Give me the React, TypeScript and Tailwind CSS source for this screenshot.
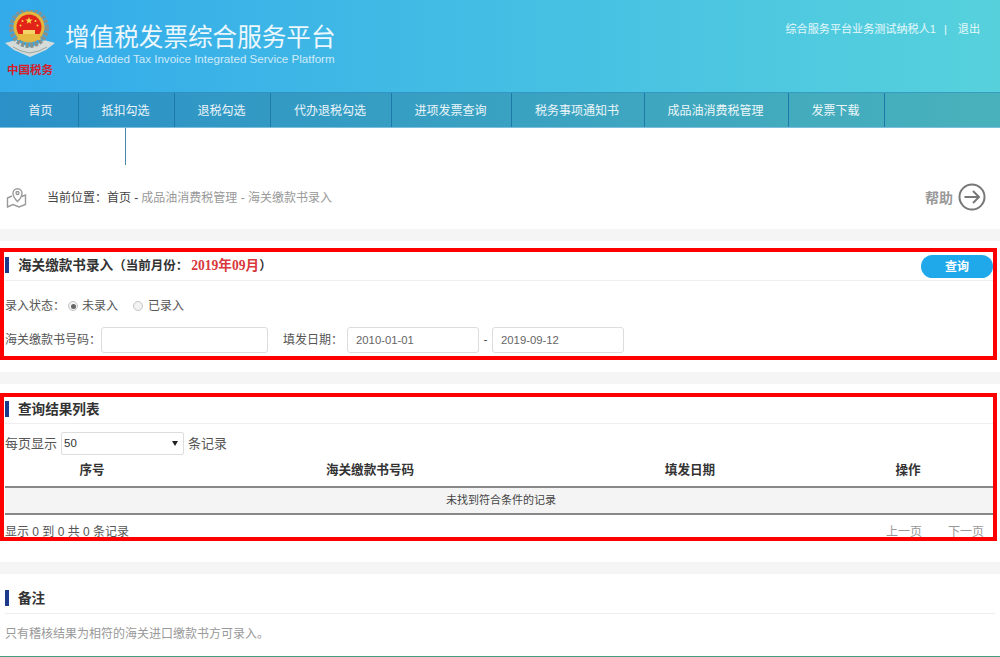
const navItems = [
  { label: '首页', width: 'w-[79px] pl-[5px]' },
  { label: '抵扣勾选', width: 'w-[96px]' },
  { label: '退税勾选', width: 'w-[96px]' },
  { label: '代办退税勾选', width: 'w-[121px]' },
  { label: '进项发票查询', width: 'w-[120px]' },
  { label: '税务事项通知书', width: 'w-[133px]' },
  { label: '成品油消费税管理', width: 'w-[144px]' },
  { label: '发票下载', width: 'w-[96px]' },
]

function Emblem() {
  return (
    <svg width="50" height="48" viewBox="0 0 50 48">
      <path d="M0 33 L11 30 Q19 36 25 37 Q31 36 39 30 L50 33 L41 40 L25 47 L9 40Z" fill="#d5dbd8" />
      <path d="M8 37 Q16 42 25 43 Q34 42 42 37" fill="none" stroke="#9aa5a3" strokeWidth="1" />
      <circle cx="24" cy="18" r="17.5" fill="none" stroke="#87918d" strokeWidth="5" strokeDasharray="3 1.6" />
      <circle cx="24" cy="17" r="15.5" fill="#e4b63e" />
      <circle cx="24" cy="17" r="12.5" fill="#e2231a" />
      <path d="M14 24 H34 L36 30 H12Z" fill="#e7b93f" />
      <path d="M18 20 H30 V24 H18Z" fill="#f4d468" />
      <path d="M24 7 l1 2.6 h2.7 l-2.2 1.6 .8 2.6 -2.3 -1.6 -2.3 1.6 .8 -2.6 -2.2 -1.6 h2.7Z" fill="#f7d64a" />
      <circle cx="17.5" cy="11" r="1" fill="#f7d64a" />
      <circle cx="30.5" cy="11" r="1" fill="#f7d64a" />
      <circle cx="15.5" cy="15.5" r="1" fill="#f7d64a" />
      <circle cx="32.5" cy="15.5" r="1" fill="#f7d64a" />
    </svg>
  )
}

function SectionTitle({ height, children }: { height: string; children: React.ReactNode }) {
  return (
    <div className={`${height} flex items-center border-b border-[#eeeeee] pb-[2px]`}>
      <span className="h-[16px] w-[4px] bg-[#1c3a8c]" />
      <span className="ml-[9px] mt-[3px] whitespace-nowrap text-[13.6px] font-bold text-[#333333]">{children}</span>
    </div>
  )
}

function Radio({ checked }: { checked?: boolean }) {
  return (
    <span className="flex h-[10px] w-[10px] items-center justify-center rounded-full border border-[#c4c4c4] bg-[#f2f2f2]">
      {checked && <span className="h-[5px] w-[5px] rounded-full bg-[#666666]" />}
    </span>
  )
}

export default function App() {
  return (
    <div className="h-[657px] w-[1000px] overflow-hidden bg-white font-['Liberation_Sans','Noto_Sans_CJK_SC',sans-serif] text-[12px] text-[#555555]">
      <header className="flex h-[128px] flex-col bg-gradient-to-r from-[#33aaea] to-[#56d1dc]">
        <div className="flex h-[92px] items-start justify-between">
          <div className="flex">
            <div className="ml-[5px] mt-[10px] flex w-[50px] flex-col items-center">
              <Emblem />
              <span className="mt-[4px] whitespace-nowrap text-[11.5px] font-bold leading-[16px] text-[#d3202a]">中国税务</span>
            </div>
            <div className="ml-[10px] mt-[22px] text-white/90">
              <div className="text-[24.6px] leading-[32px] whitespace-nowrap">增值税发票综合服务平台</div>
              <div className="-mt-[2px] text-[11.6px] leading-[14px] whitespace-nowrap text-white/75">
                Value Added Tax Invoice Integrated Service Platform
              </div>
            </div>
          </div>
          <div className="mr-[20px] mt-[21px] flex text-[11.1px] leading-[16px] text-white/85">
            <span>综合服务平台业务测试纳税人1</span>
            <span className="ml-[8px]">|</span>
            <span className="ml-[11px]">退出</span>
          </div>
        </div>
        <nav className="flex h-[36px] border-y border-b-[#7cbfdc] border-t-[#2f8fc4]/60 bg-black/15">
          {navItems.map((item) => (
            <div
              key={item.label}
              className={`${item.width} flex items-center justify-center border-r border-[#1f78aa] pr-[2px] pt-[1px] text-[12px] whitespace-nowrap text-white/90`}
            >
              {item.label}
            </div>
          ))}
        </nav>
      </header>

      <div className="ml-[125px] h-[37px] w-px bg-[#4a86a8]" />

      <div className="flex h-[64px] items-center justify-between">
        <div className="flex items-center">
          <svg className="ml-[6px]" width="21" height="21" viewBox="0 0 21 21" fill="none" stroke="#999999" strokeWidth="1.4">
            <path d="M6 9 L1.5 11 V20 L7 17.5 L13 20 L19.5 17.5 V8 L15.5 9.5" />
            <path d="M11.5 14.5 C8.5 11.5 7 9 7 6.2 A4.5 4.5 0 0 1 16 6.2 C16 9 14.5 11.5 11.5 14.5Z" />
            <circle cx="11.5" cy="6" r="1.5" />
          </svg>
          <span className="ml-[20px] mt-[2px] text-[#444444]">当前位置：首页 - </span>
          <span className="ml-[3px] mt-[2px] text-[#999999]">成品油消费税管理 - 海关缴款书录入</span>
        </div>
        <div className="mr-[14px] flex items-center">
          <span className="mt-[2px] text-[14px] font-bold text-[#999999]">帮助</span>
          <svg className="ml-[5px]" width="28" height="28" viewBox="0 0 28 28" fill="none" stroke="#777777" strokeWidth="2">
            <circle cx="14" cy="14" r="12.5" />
            <path d="M6.5 14 H21 M15 8 L21 14 L15 20" />
          </svg>
        </div>
      </div>

      <div className="h-[12px] bg-[#f5f5f5]" />

      <section className="mr-[3px] mt-[7px] h-[112px] border-[4px] border-[#ff0000] pl-[1px]">
        <div className="relative">
          <SectionTitle height="h-[29px]">
            海关缴款书录入
            <span className="text-[12.5px]">（当前月份：</span>
            <span className="ml-[3px] font-['Liberation_Serif','Noto_Sans_CJK_SC',serif] text-[#d9383c]">2019年09月</span>
            <span className="text-[12.5px]">）</span>
          </SectionTitle>
          <button className="absolute right-0 top-[3px] h-[23px] w-[72px] rounded-full bg-[#1fa9ea] text-[12px] font-bold text-white">
            查询
          </button>
        </div>
        <div className="mt-[16px] flex h-[18px] items-center">
          <span>录入状态：</span>
          <span className="ml-[3px]"><Radio checked /></span>
          <span className="ml-[4px]">未录入</span>
          <span className="ml-[15px]"><Radio /></span>
          <span className="ml-[5px]">已录入</span>
        </div>
        <div className="mt-[12px] flex items-center">
          <span>海关缴款书号码：</span>
          <div className="h-[26px] w-[167px] rounded-[3px] border border-[#dddddd] bg-white" />
          <span className="ml-[15px]">填发日期：</span>
          <div className="ml-[4px] flex h-[26px] w-[132px] items-center rounded-[3px] border border-[#dddddd] px-[8px] text-[11.3px] text-[#666666]">2010-01-01</div>
          <span className="w-[13px] text-center">-</span>
          <div className="flex h-[26px] w-[132px] items-center rounded-[3px] border border-[#dddddd] px-[8px] text-[11.3px] text-[#666666]">2019-09-12</div>
        </div>
      </section>

      <div className="mt-[12px] h-[12px] bg-[#f5f5f5]" />

      <section className="mr-[3px] mt-[9px] h-[148px] overflow-hidden border-[4px] border-[#ff0000] pl-[1px]">
        <SectionTitle height="h-[27px]">查询结果列表</SectionTitle>
        <div className="mt-[8px] flex items-center">
          <span className="text-[13px]">每页显示</span>
          <div className="relative ml-[4px] flex h-[23px] w-[123px] items-center rounded-[2px] border border-[#dddddd] pl-[2px] text-[11.5px] text-[#333333]">
            50
            <span className="absolute right-[5px] top-[8px] h-0 w-0 border-x-[3px] border-t-[5px] border-x-transparent border-t-[#222222]" />
          </div>
          <span className="ml-[4px] text-[13px]">条记录</span>
        </div>
        <table className="mt-[4px] w-full table-fixed border-collapse">
          <thead>
            <tr className="h-[28px] border-b-2 border-[#888888] text-[12.6px] font-bold text-[#333333]">
              <th className="w-[174px] pb-[4px]">序号</th>
              <th className="w-[378px] pb-[4px] pl-[4px]">海关缴款书号码</th>
              <th className="w-[266px] pb-[4px]">填发日期</th>
              <th className="pb-[4px]">操作</th>
            </tr>
          </thead>
          <tbody>
            <tr className="h-[27px] border-b-2 border-[#888888] bg-[#f4f4f4]">
              <td colSpan={4} className="pl-[4px] text-center text-[11px] text-[#444444]">未找到符合条件的记录</td>
            </tr>
          </tbody>
        </table>
        <div className="mt-[8px] flex justify-between leading-[18px]">
          <span>显示 0 到 0 共 0 条记录</span>
          <div className="flex text-[#999999]">
            <span>上一页</span>
            <span className="ml-[26px] mr-[9px]">下一页</span>
          </div>
        </div>
      </section>

      <div className="mt-[21px] h-[12px] bg-[#f5f5f5]" />

      <section className="px-[5px] pt-[11px]">
        <SectionTitle height="h-[29px]">备注</SectionTitle>
        <p className="mt-[11px] text-[12px] leading-[18px] text-[#999999]">只有稽核结果为相符的海关进口缴款书方可录入。</p>
      </section>
      <div className="mt-[13px] h-px bg-[#4a9a80]" />
    </div>
  )
}
